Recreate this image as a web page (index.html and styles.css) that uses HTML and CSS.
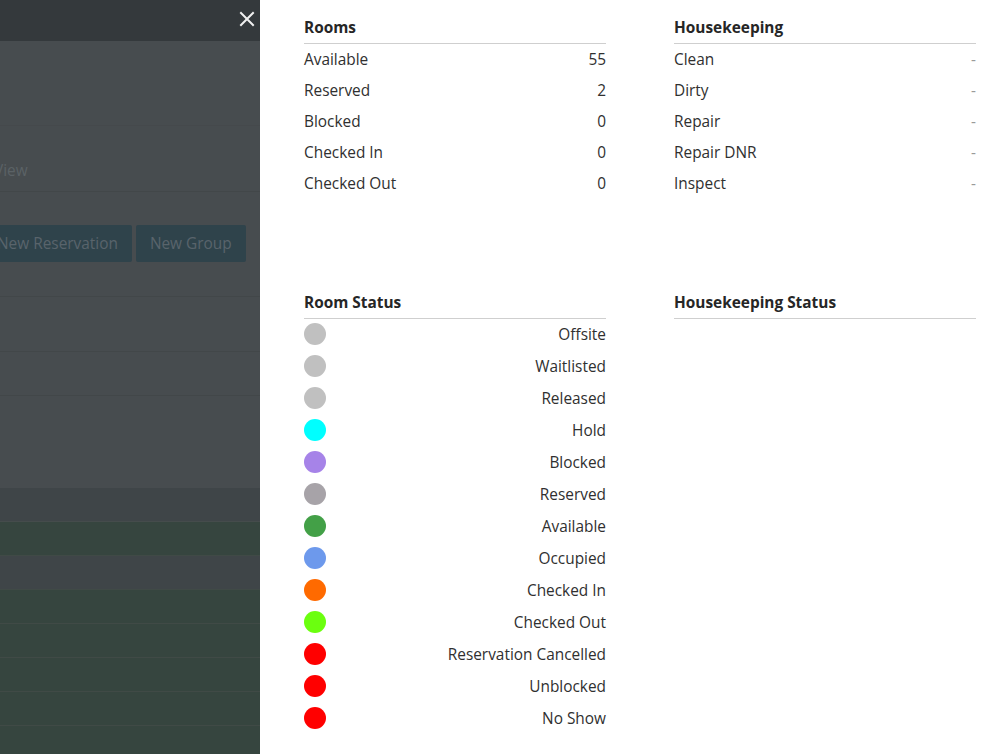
FILE: index.html
```html
<!DOCTYPE html>
<html>
<head>
<meta charset="utf-8">
<link rel="stylesheet" href="styles.css">
</head>
<body>
<div class="screen">
  <div class="backdrop">
    <div class="bd-header">
      <svg class="close" width="16" height="16" viewBox="0 0 16 16"><path d="M2 2L14 14M14 2L2 14" stroke="#f0f0f0" stroke-width="2" stroke-linecap="square" fill="none"/></svg>
    </div>
    <div class="bd-main">
      <div class="bd-row bd-r1"></div>
      <div class="bd-row bd-r2"><span class="bd-tab">View</span></div>
      <div class="bd-row bd-r3">
        <span class="bd-btn">New Reservation</span>
        <span class="bd-btn">New Group</span>
      </div>
      <div class="bd-row bd-r4"></div>
      <div class="bd-row bd-r5"></div>
      <div class="bd-row bd-r6"></div>
    </div>
    <div class="bd-band"></div>
    <div class="bd-list">
      <div class="bd-item green"></div>
      <div class="bd-item gray"></div>
      <div class="bd-item green"></div>
      <div class="bd-item green"></div>
      <div class="bd-item green"></div>
      <div class="bd-item green"></div>
      <div class="bd-item green"></div>
    </div>
  </div>
  <div class="panel">
    <div class="grid">
      <section class="box">
        <h2 class="box-title">Rooms</h2>
        <div class="stat"><span>Available</span><span>55</span></div>
        <div class="stat"><span>Reserved</span><span>2</span></div>
        <div class="stat"><span>Blocked</span><span>0</span></div>
        <div class="stat"><span>Checked In</span><span>0</span></div>
        <div class="stat"><span>Checked Out</span><span>0</span></div>
      </section>
      <section class="box">
        <h2 class="box-title">Housekeeping</h2>
        <div class="stat"><span>Clean</span><span class="dash">-</span></div>
        <div class="stat"><span>Dirty</span><span class="dash">-</span></div>
        <div class="stat"><span>Repair</span><span class="dash">-</span></div>
        <div class="stat"><span>Repair DNR</span><span class="dash">-</span></div>
        <div class="stat"><span>Inspect</span><span class="dash">-</span></div>
      </section>
      <section class="box">
        <h2 class="box-title">Room Status</h2>
        <div class="legend"><span class="dot c-offsite"></span><span>Offsite</span></div>
        <div class="legend"><span class="dot c-offsite"></span><span>Waitlisted</span></div>
        <div class="legend"><span class="dot c-offsite"></span><span>Released</span></div>
        <div class="legend"><span class="dot c-hold"></span><span>Hold</span></div>
        <div class="legend"><span class="dot c-blocked"></span><span>Blocked</span></div>
        <div class="legend"><span class="dot c-reserved"></span><span>Reserved</span></div>
        <div class="legend"><span class="dot c-available"></span><span>Available</span></div>
        <div class="legend"><span class="dot c-occupied"></span><span>Occupied</span></div>
        <div class="legend"><span class="dot c-in"></span><span>Checked In</span></div>
        <div class="legend"><span class="dot c-out"></span><span>Checked Out</span></div>
        <div class="legend"><span class="dot c-red"></span><span>Reservation Cancelled</span></div>
        <div class="legend"><span class="dot c-red"></span><span>Unblocked</span></div>
        <div class="legend"><span class="dot c-red"></span><span>No Show</span></div>
      </section>
      <section class="box">
        <h2 class="box-title">Housekeeping Status</h2>
      </section>
    </div>
  </div>
</div>
</body>
</html>
```
FILE: styles.css
```css
* { box-sizing: border-box; }
html, body { margin: 0; padding: 0; }
body {
  font-family: "Open Sans", "Liberation Sans", sans-serif;
  font-size: 15.4px;
  color: #303030;
  background: #fff;
  overflow: hidden;
}
.screen {
  display: flex;
  width: 1008px;
  height: 754px;
}
.backdrop {
  width: 260px;
  flex: none;
  background: #474c4f;
  overflow: hidden;
  display: flex;
  flex-direction: column;
}
.backdrop > * { flex: none; }
.bd-header {
  height: 41px;
  background: #34393c;
  display: flex;
  justify-content: flex-end;
  align-items: flex-start;
  padding: 11px 5px 0 0;
}
.close { display: block; }
.bd-main {
  height: 447px;
  display: flex;
  flex-direction: column;
}
.bd-main > * { flex: none; }
.bd-row { border-bottom: 1px solid #424749; }
.bd-r1 { height: 85px; border-bottom-color: #45494c; }
.bd-r2 {
  height: 66px;
  display: flex;
  align-items: flex-end;
  padding-bottom: 10px;
}
.bd-tab {
  color: #5b6266;
  margin-left: -6px;
}
.bd-r3 {
  height: 105px;
  display: flex;
  gap: 4px;
  padding-top: 33px;
  align-items: flex-start;
  margin-left: -17px;
}
.bd-btn {
  background: #2f434b;
  color: #59646b;
  height: 37px;
  line-height: 37px;
  padding: 0 14px;
  border-radius: 2px;
}
.bd-r4 { height: 55px; }
.bd-r5 { height: 44px; }
.bd-main > .bd-r6 { flex: 1; border-bottom: none; }
.bd-band {
  height: 34px;
  background: #3f4548;
  border-bottom: 1px solid #454c4c;
}
.bd-list { display: flex; flex-direction: column; }
.bd-item { height: 34px; flex: none; border-bottom: 1px solid #404a46; }
.bd-item.green { background: #36453f; }
.bd-item.gray { background: #3f4548; }

.panel {
  flex: 1;
  background: #fff;
  padding: 17px 32px 0 44px;
}
.grid {
  display: grid;
  grid-template-columns: 302px 302px;
  column-gap: 68px;
  row-gap: 93px;
  align-items: start;
}
.box-title {
  margin: 0;
  font-size: 15.4px;
  font-weight: 700;
  color: #262626;
  line-height: 22px;
  padding-bottom: 4px;
  border-bottom: 1px solid #cfcfcf;
}
.stat {
  display: flex;
  justify-content: space-between;
  height: 31px;
  line-height: 31px;
}
.dash { color: #9a9a9a; }
.legend {
  display: flex;
  justify-content: space-between;
  align-items: center;
  height: 32px;
}
.legend:first-of-type { margin-top: -1px; }
.dot {
  width: 22px;
  height: 22px;
  border-radius: 50%;
  flex: none;
}
.c-offsite { background: #c0c0c0; }
.c-hold { background: #00ffff; }
.c-blocked { background: #a683e8; }
.c-reserved { background: #a7a3a8; }
.c-available { background: #43a047; }
.c-occupied { background: #6d99ec; }
.c-in { background: #ff6a00; }
.c-out { background: #6bff0f; }
.c-red { background: #ff0000; }
```
